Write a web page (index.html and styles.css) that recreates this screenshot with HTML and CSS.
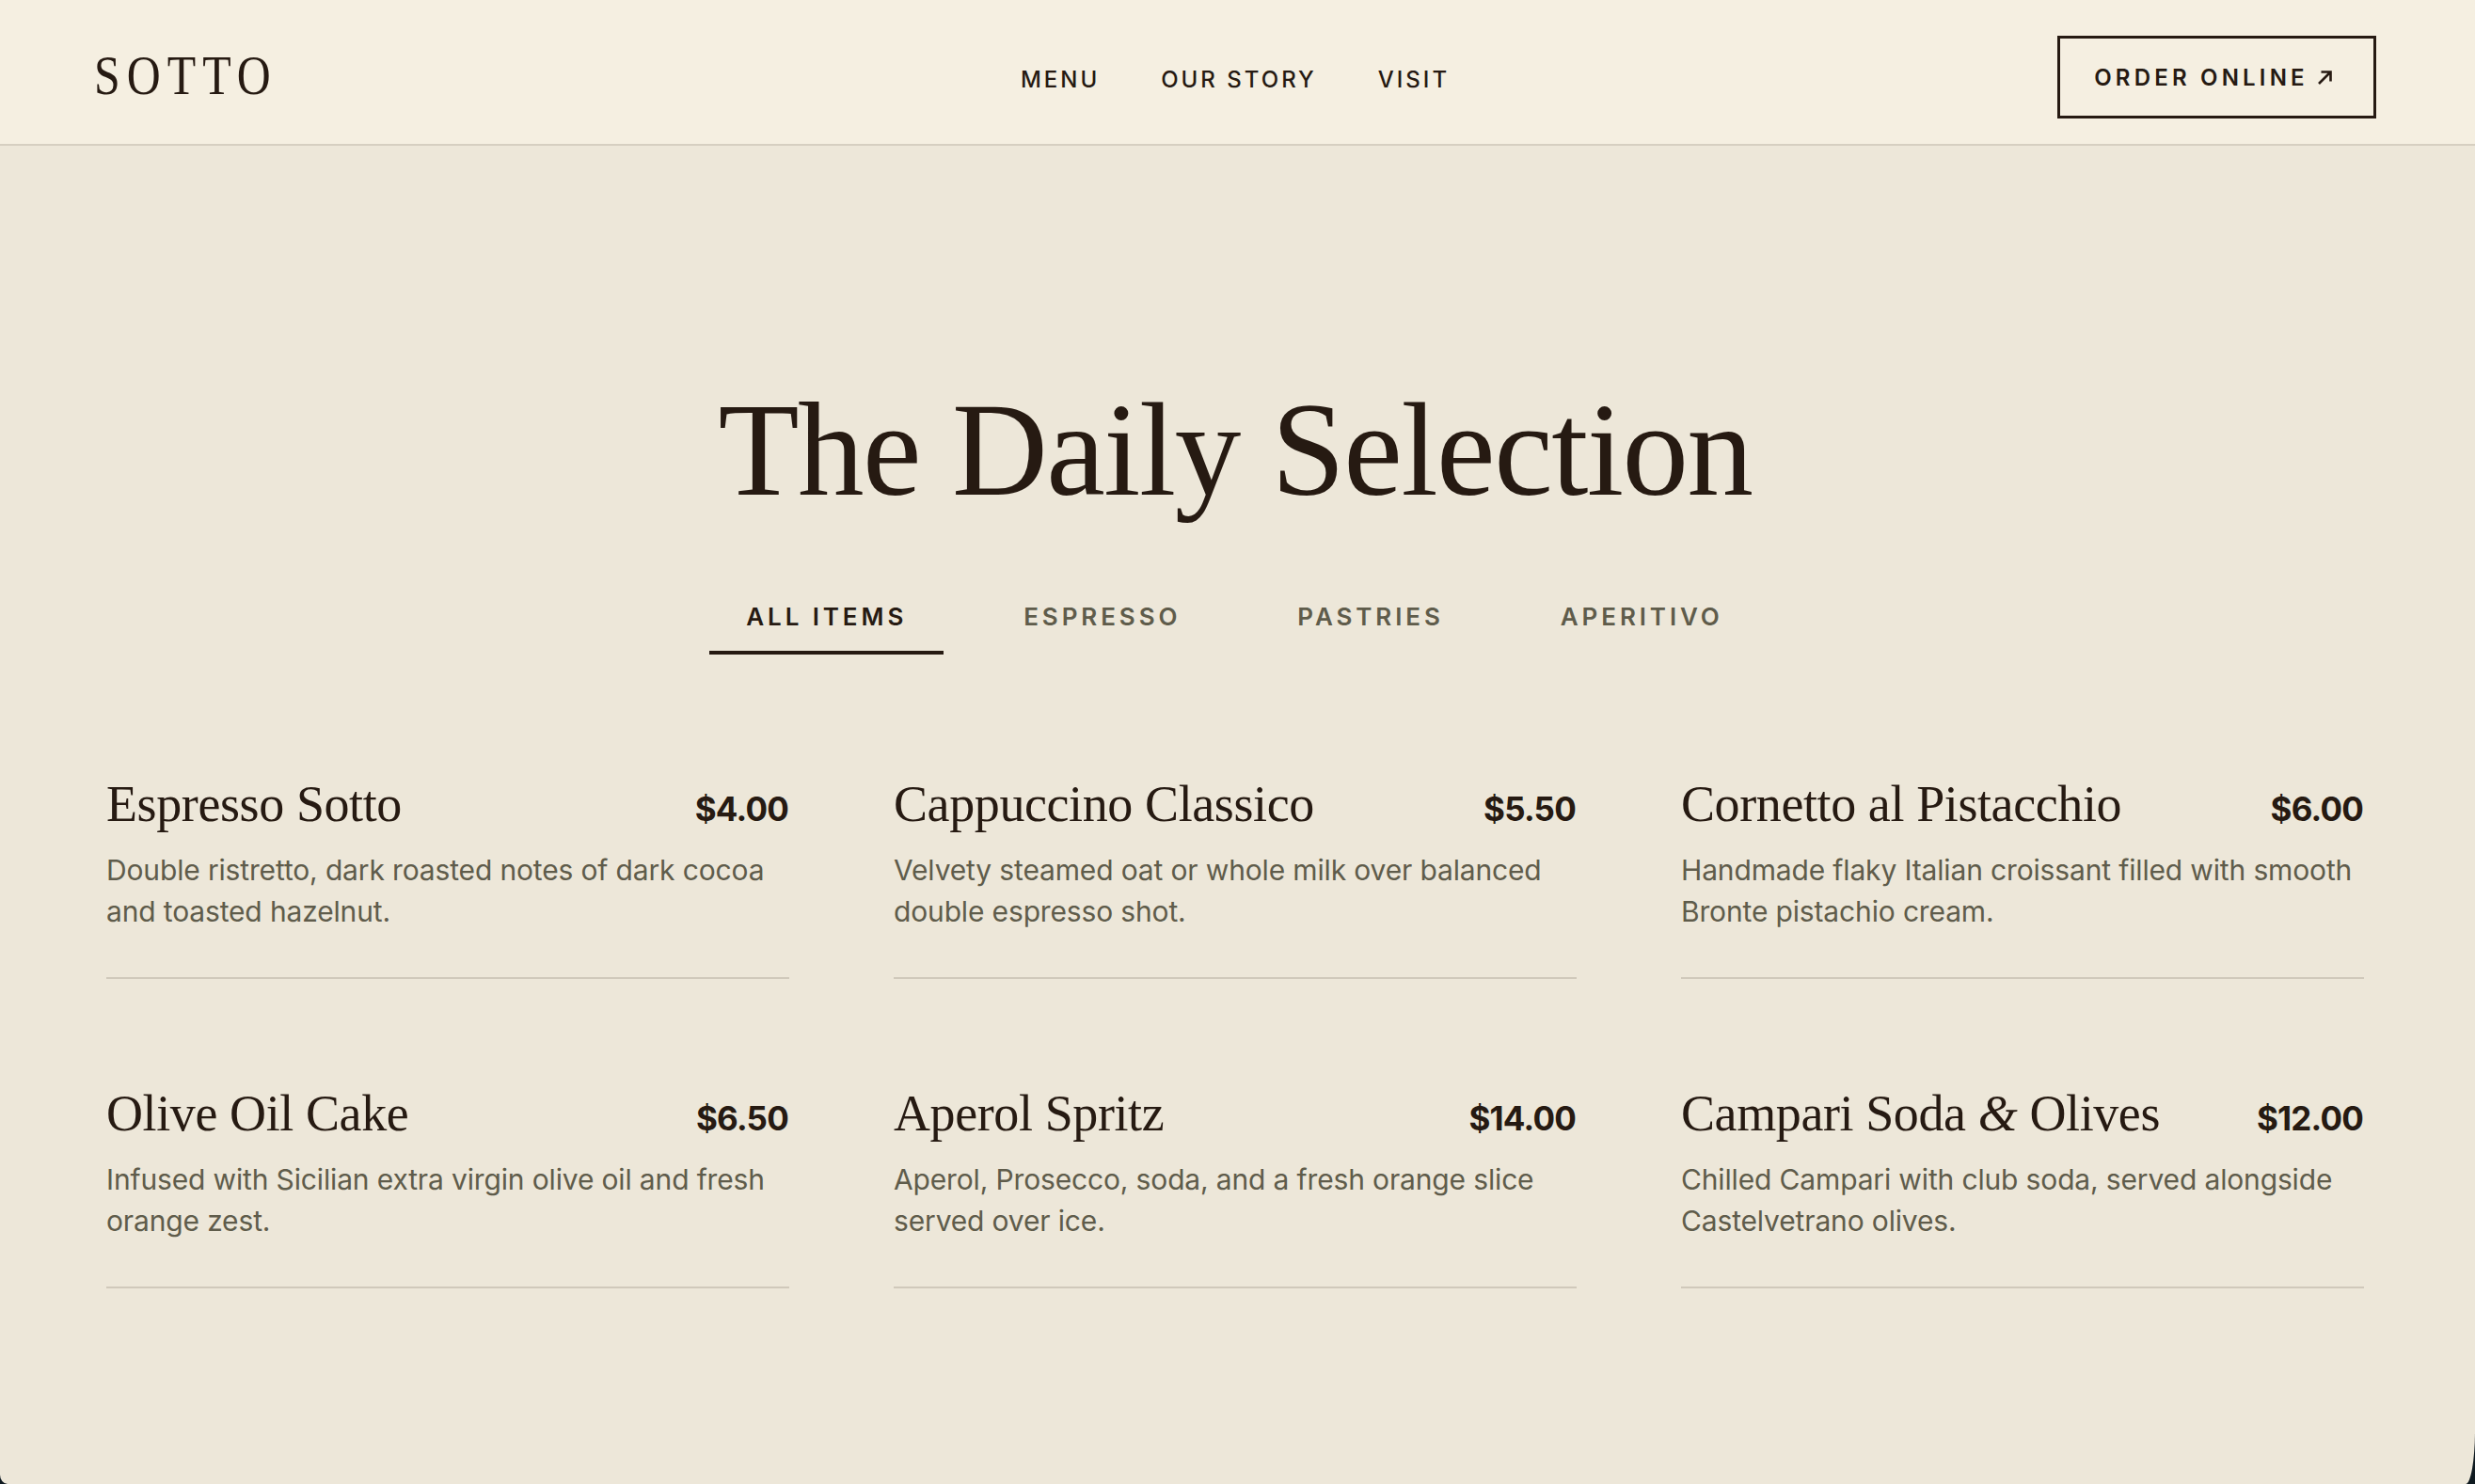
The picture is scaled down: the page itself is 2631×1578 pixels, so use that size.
FILE: index.html
```html
<!DOCTYPE html>
<html lang="en">
<head>
<meta charset="utf-8">
<title>Sotto</title>
<link rel="stylesheet" href="styles.css">
</head>
<body>
<div class="page">
  <header class="header">
    <div class="logo">SOTTO</div>
    <nav class="nav"><a>MENU</a><a>OUR STORY</a><a>VISIT</a></nav>
    <a class="order">ORDER ONLINE
      <svg class="arrow" viewBox="0 0 15 15" width="15" height="15" aria-hidden="true"><path d="M1 14 L13.5 1.5 M3.5 1.5 H13.5 V11.5" fill="none" stroke="currentColor" stroke-width="2.6"/></svg>
    </a>
  </header>
  <main class="main">
    <h1 class="title">The Daily Selection</h1>
    <div class="tabs">
      <a class="tab active">ALL ITEMS</a><a class="tab">ESPRESSO</a><a class="tab">PASTRIES</a><a class="tab">APERITIVO</a>
    </div>
    <section class="grid">
      <article class="item"><div class="row"><h2 class="name">Espresso Sotto</h2><span class="price">$4.00</span></div><p class="desc">Double ristretto, dark roasted notes of dark cocoa<br>and toasted hazelnut.</p></article>
      <article class="item"><div class="row"><h2 class="name">Cappuccino Classico</h2><span class="price">$5.50</span></div><p class="desc">Velvety steamed oat or whole milk over balanced<br>double espresso shot.</p></article>
      <article class="item"><div class="row"><h2 class="name">Cornetto al Pistacchio</h2><span class="price">$6.00</span></div><p class="desc">Handmade flaky Italian croissant filled with smooth<br>Bronte pistachio cream.</p></article>
      <article class="item"><div class="row"><h2 class="name">Olive Oil Cake</h2><span class="price">$6.50</span></div><p class="desc">Infused with Sicilian extra virgin olive oil and fresh<br>orange zest.</p></article>
      <article class="item"><div class="row"><h2 class="name">Aperol Spritz</h2><span class="price">$14.00</span></div><p class="desc">Aperol, Prosecco, soda, and a fresh orange slice<br>served over ice.</p></article>
      <article class="item"><div class="row"><h2 class="name">Campari Soda <i class="amp">&amp;</i> Olives</h2><span class="price">$12.00</span></div><p class="desc">Chilled Campari with club soda, served alongside<br>Castelvetrano olives.</p></article>
    </section>
  </main>
</div>
</body>
</html>
```
FILE: styles.css
```css
* { box-sizing: border-box; }
html, body { margin: 0; padding: 0; height: 100%; background: #0f1a20; overflow: hidden; }
body { font-family: "Inter", "DejaVu Sans", sans-serif; color: #261a12; }
.page {
  width: 2631px; height: 1578px; background: #ede7d9;
  border-radius: 0 0 10px 8px / 0 0 57px 10px;
  overflow: hidden;
}
.header {
  height: 155px; background: #f5efe1; border-bottom: 2px solid #d6cfc1;
  padding: 10px 105px 0 100px;
  display: grid; grid-template-columns: 1fr auto 1fr; align-items: center;
}
.logo {
  font-family: "Liberation Serif", serif; font-size: 60px; letter-spacing: 8.5px; line-height: 1;
  justify-self: start; margin-top: -3px; transform: scaleX(0.83); transform-origin: left center;
}
.nav { display: flex; gap: 65px; font-size: 24px; font-weight: 500; letter-spacing: 3px; margin-top: 5px; }
.order {
  justify-self: end; width: 339px; height: 88px; border: 3px solid #261a12; padding-top: 2px;
  display: flex; align-items: center; justify-content: center; gap: 10px;
  font-size: 24px; font-weight: 600; letter-spacing: 4.2px;
}
.arrow { display: block; margin-right: 8px; }
.main { padding: 0 118px 0 113px; }
.title {
  margin: 243px 0 0; text-align: center; font-family: "Liberation Serif", serif; font-weight: 400;
  font-size: 141px; line-height: 160px; letter-spacing: -1.5px;
}
.tabs { display: flex; justify-content: center; gap: 46px; margin: 78px 1px 0 0; }
.tab {
  padding: 0 39px 16px; font-size: 26px; font-weight: 600; letter-spacing: 3.9px; line-height: 40px;
  color: #5f5c4b; border-bottom: 4px solid transparent;
}
.tab.active { color: #261a12; border-bottom-color: #261a12; }
.grid { display: grid; grid-template-columns: repeat(3, 1fr); column-gap: 111px; row-gap: 112px; margin-top: 128px; }
.item { border-bottom: 2px solid #d0c9bb; height: 217px; }
.row { display: flex; justify-content: space-between; align-items: baseline; }
.name { margin: 0; font-family: "Liberation Serif", serif; font-weight: 400; font-size: 54px; line-height: 62px; letter-spacing: -0.4px; }
.amp { font-style: italic; }
.price { font-size: 35px; font-weight: 700; letter-spacing: -0.8px; margin-right: 1px; }
.desc { margin: 17px 0 0; font-size: 30px; line-height: 44px; letter-spacing: -0.15px; color: #5f5c4b; }
```
